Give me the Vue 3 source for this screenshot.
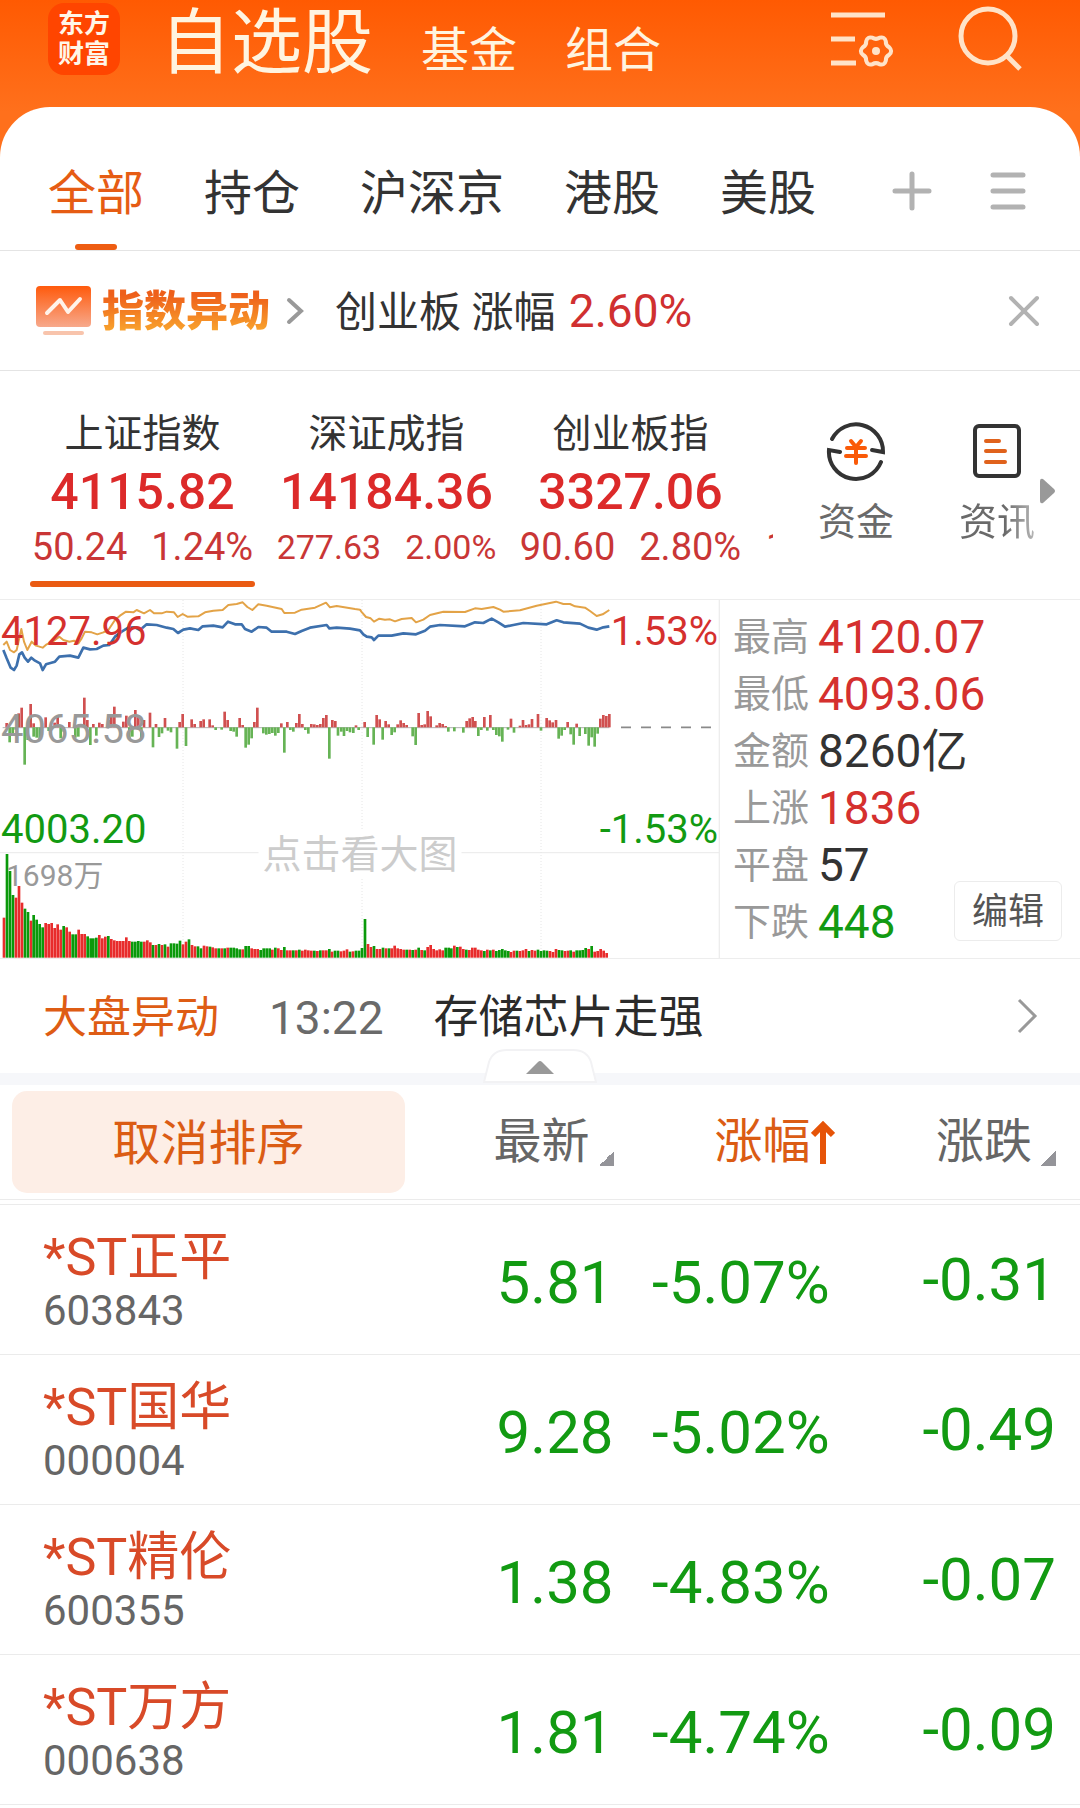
<script setup>
import { ref } from 'vue'

const markets = ['全部', '持仓', '沪深京', '港股', '美股']
const activeMarket = ref('全部')

const indices = [
  { name: '上证指数', value: '4115.82', change: '50.24', percent: '1.24%' },
  { name: '深证成指', value: '14184.36', change: '277.63', percent: '2.00%', compact: true },
  { name: '创业板指', value: '3327.06', change: '90.60', percent: '2.80%' },
]
const activeIndex = ref('上证指数')

const stats = [
  { label: '最高', value: '4120.07', tone: 'up' },
  { label: '最低', value: '4093.06', tone: 'up' },
  { label: '金额', value: '8260亿', tone: 'flat' },
  { label: '上涨', value: '1836', tone: 'up' },
  { label: '平盘', value: '57', tone: 'flat' },
  { label: '下跌', value: '448', tone: 'down' },
]

const stocks = [
  { name: '*ST正平', code: '603843', price: '5.81', percent: '-5.07%', change: '-0.31' },
  { name: '*ST国华', code: '000004', price: '9.28', percent: '-5.02%', change: '-0.49' },
  { name: '*ST精伦', code: '600355', price: '1.38', percent: '-4.83%', change: '-0.07' },
  { name: '*ST万方', code: '000638', price: '1.81', percent: '-4.74%', change: '-0.09' },
]

// Chart space: 2160 units wide, three per pixel; y runs from 15 to 1089.
const leadLine =
  '10,150 20,140 30,165 42,172 50,165 64,102 72,140 82,165 95,140 108,152 128,158 140,148 158,140 178,125 190,135 208,140 222,137 235,145 245,130 255,110 275,112 292,118 310,112 325,105 345,75 360,62 378,50 400,52 410,45 432,55 450,45 462,55 485,55 500,50 522,52 533,66 548,57 562,65 595,64 615,52 640,47 668,45 685,30 710,27 728,22 742,36 757,45 775,28 800,32 845,42 853,54 885,53 905,44 945,38 978,23 990,37 1010,33 1065,42 1080,44 1084,50 1098,66 1112,70 1122,80 1138,71 1155,74 1170,73 1185,79 1205,72 1235,69 1248,82 1270,74 1290,60 1330,50 1395,51 1425,40 1445,42 1480,36 1500,44 1510,50 1560,46 1610,32 1668,20 1690,27 1710,27 1725,34 1755,38 1770,48 1790,63 1808,58 1828,45'
const priceLine =
  '10,165 20,190 32,218 42,225 50,212 58,178 66,172 74,188 84,200 94,188 105,197 120,205 128,225 138,208 165,200 178,185 210,182 235,188 250,158 270,163 290,162 310,152 328,150 345,125 365,110 385,98 405,97 420,105 440,88 470,90 500,98 520,102 534,114 550,104 570,100 595,105 608,94 640,92 668,97 684,80 705,88 725,88 735,102 755,110 775,96 800,98 815,110 860,110 885,117 905,108 930,98 980,90 988,100 1010,98 1050,101 1080,106 1090,118 1100,125 1115,127 1122,135 1135,122 1175,122 1210,115 1248,118 1275,107 1290,95 1320,90 1395,94 1425,82 1450,84 1475,71 1495,82 1515,95 1540,90 1570,84 1640,88 1670,76 1690,82 1740,86 1765,98 1790,104 1810,97 1828,94'

const MID = 397
const momentumData =
  '20,384 56,355 65,338 92,327 101,385 137,367 164,383 173,366 208,381 253,308 262,375 280,387 298,383 307,387 325,375 334,360 343,335 370,380 379,362 406,345 415,365 432,375 450,353 468,387 495,369 539,381 548,357 575,373 584,387 602,378 611,373 629,373 638,391 674,350 683,375 719,369 728,390 763,381 772,338 844,385 862,381 889,384 898,357 907,387 934,387 943,388 952,390 961,387 970,369 979,360 997,375 1006,378 1068,391 ' +
  '29,442 38,420 47,404 74,509 83,435 101,425 110,428 119,435 146,408 182,430 191,410 226,428 235,425 271,450 289,422 388,430 397,425 424,430 459,457 477,426 486,415 504,407 513,412 531,461 558,453 647,405 665,404 692,408 701,410 710,425 737,458 746,449 755,430 790,415 799,419 808,417 817,414 826,422 835,414 853,473 871,405 880,410 916,405 925,416 988,491 1014,422 1024,410 1032,423 1041,408 1050,412 1060,414 1076,405 ' +
  '1094,381 1130,360 1139,373 1157,378 1166,388 1193,388 1202,376 1211,384 1220,390 1256,354 1265,390 1274,388 1283,348 1292,364 1310,391 1319,384 1328,387 1337,393 1400,378 1409,370 1418,366 1426,378 1453,366 1471,360 1533,371 1560,392 1569,375 1578,390 1587,388 1596,372 1614,357 1640,369 1649,376 1658,382 1668,375 1703,381 1730,386 1801,371 1810,360 1819,363 1828,357 ' +
  '1103,426 1121,449 1148,434 1175,420 1184,412 1238,424 1247,450 1345,410 1363,409 1390,413 1435,423 1444,405 1462,407 1480,405 1489,420 1498,424 1507,440 1524,404 1542,413 1623,407 1676,431 1685,422 1694,405 1712,418 1721,449 1739,423 1756,417 1766,452 1775,427 1784,455 1793,416'
const momentum = momentumData.split(' ').map((pair) => {
  const [x, y] = pair.split(',').map(Number)
  return { x: x - 4, y: Math.min(y, MID), height: Math.abs(y - MID), rising: y < MID }
})

const FLOOR = 1088
const volumeData =
  '968r 777g 828g 900g 908r 873r 923r 941g 951g 977r 960g 974g 987g 997g 984r 987r 984r 999r 988r 1004r 993g 997r 1010r 1018g 1018g 1004r 1017r 1017r 1024g 1030g 1030g 1028g 1020r 1030r 1025r 1023g 1032r 1036r 1038r 1038r 1038r 1027r 1038r 1040g 1040g 1038g 1040g 1040r 1036r 1042r 1050g 1050r 1047g 1050r 1048g 1055r 1045g 1045g 1046g 1037g 1048r 1040r 1033g 1050r 1054r 1054g 1060g 1052r 1054r 1055g 1057r 1060r 1060g 1060r 1060g 1058r 1058g 1058g 1060g 1063g 1063r 1053g 1053g 1060r 1062r 1062r 1065g 1060g 1060g 1060g 1064r 1058g 1060r 1065r 1056g 1066r 1066r 1066g 1066r 1064g 1067r 1064r 1066r 1067r 1067g 1068r 1066g 1066r 1066r 1062g 1070r 1067g 1067g 1069r 1067r 1063r 1070g 1069r 1067g 1067g 1059g ' +
  '972g 1047r 1056r 1053g 1062r 1062r 1058g 1060r 1060g 1060r 1052r 1060r 1062r 1064r 1064g 1064r 1065g 1064r 1058g 1065r 1066g 1056r 1050r 1062r 1066r 1063r 1066r 1058g 1058g 1060g 1052r 1056g 1055r 1062r 1064g 1065r 1058r 1058r 1064r 1066r 1068g 1064r 1066g 1064r 1068g 1065g 1062g 1066g 1068g 1071r 1067r 1067g 1068r 1066r 1062r 1068g 1065r 1067r 1064g 1068g 1066g 1067g 1068r 1071r 1062r 1065g 1066g 1068r 1067r 1066g 1070r 1066g 1066g 1065g 1059g 1062r 1053g 1070r 1068r 1062r 1067r 1074r'
const volume = volumeData.split(' ').map((entry, i) => {
  const top = parseInt(entry, 10)
  return { x: 8 + i * 9 - Math.round(i / 20), y: top, height: FLOOR - top, rising: entry.endsWith('r') }
})
</script>

<template>
  <div class="app">
    <header class="topbar">
      <div class="logo"><span>东方</span><span>财富</span></div>
      <nav class="sections">
        <a href="#watchlist" class="current">自选股</a>
        <a href="#funds">基金</a>
        <a href="#portfolio">组合</a>
      </nav>
      <div class="tools">
        <button type="button" aria-label="列表设置">
          <svg width="66" height="66" viewBox="0 0 66 66" fill="none" stroke="#ffe3c8" stroke-width="5">
            <path d="M3 9H57M3 33H27M3 57H28" />
            <path
              stroke-width="4"
              stroke-linejoin="round"
              d="M61.3 41.4Q65 45 61.3 48.6Q57.5 50.5 57.8 54.8Q56.5 59.7 51.6 58.3Q48 56 44.4 58.3Q39.5 59.7 38.2 54.8Q38.5 50.5 34.7 48.6Q31 45 34.7 41.4Q38.5 39.5 38.2 35.2Q39.5 30.3 44.4 31.7Q48 34 51.6 31.7Q56.5 30.3 57.8 35.2Q57.5 39.5 61.3 41.4Z"
            />
            <circle cx="48" cy="45" r="4" fill="#ffe3c8" stroke="none" />
          </svg>
        </button>
        <button type="button" aria-label="搜索">
          <svg width="66" height="66" viewBox="0 0 66 66" fill="none" stroke="#ffe3c8" stroke-width="5">
            <circle cx="30" cy="30" r="27" />
            <path d="M48 49L62 63" />
          </svg>
        </button>
      </div>
    </header>

    <main class="panel">
      <div class="markets">
        <button
          v-for="m in markets"
          :key="m"
          type="button"
          class="market"
          :class="{ active: m === activeMarket }"
          @click="activeMarket = m"
        >
          {{ m }}
        </button>
        <div class="market-tools">
          <button type="button" aria-label="添加分组">
            <svg width="40" height="40" viewBox="0 0 40 40" stroke="#b2b2b2" stroke-width="5" stroke-linecap="round">
              <path d="M20 3V37M3 20H37" />
            </svg>
          </button>
          <button type="button" aria-label="管理分组">
            <svg width="40" height="40" viewBox="0 0 40 40" stroke="#b2b2b2" stroke-width="5" stroke-linecap="round">
              <path d="M5 4H35M5 20H35M5 36H35" />
            </svg>
          </button>
        </div>
      </div>

      <section class="alert">
        <svg class="alert-icon" width="55" height="50" viewBox="0 0 55 50">
          <defs>
            <linearGradient id="badge" x1="0" y1="0" x2="0" y2="1">
              <stop offset="0" stop-color="#ff5a0c" />
              <stop offset="1" stop-color="#f7a98c" />
            </linearGradient>
          </defs>
          <rect width="55" height="41" rx="4" fill="url(#badge)" />
          <path d="M11 27L24 14L32 26L44 13" fill="none" stroke="#fff3ea" stroke-width="4" stroke-linecap="round" stroke-linejoin="round" />
          <rect x="7" y="45" width="41" height="4" rx="2" fill="#f8c4ac" />
        </svg>
        <strong class="alert-title">指数异动</strong>
        <svg class="alert-arrow" width="18" height="30" viewBox="0 0 18 30" fill="none" stroke="#999" stroke-width="4" stroke-linecap="round">
          <path d="M3 4L15 15L3 26" />
        </svg>
        <p class="alert-text">创业板 涨幅 <b>2.60%</b></p>
        <button type="button" class="alert-close" aria-label="关闭">
          <svg width="32" height="32" viewBox="0 0 32 32" stroke="#b2b2b2" stroke-width="4" stroke-linecap="round">
            <path d="M3 3L29 29M29 3L3 29" />
          </svg>
        </button>
      </section>

      <section class="overview">
        <div class="indices">
          <button
            v-for="item in indices"
            :key="item.name"
            type="button"
            class="index"
            :class="{ active: item.name === activeIndex, compact: item.compact }"
            @click="activeIndex = item.name"
          >
            <span class="index-name">{{ item.name }}</span>
            <span class="index-value">{{ item.value }}</span>
            <span class="index-change"><span>{{ item.change }}</span><span>{{ item.percent }}</span></span>
          </button>
          <div class="index next">
            <span class="index-change">1</span>
          </div>
        </div>
        <div class="shortcuts">
          <a href="#capital" class="shortcut">
            <svg width="62" height="62" viewBox="0 0 62 62" fill="none" stroke="#333" stroke-width="4">
              <path d="M7 19A27 27 0 0 1 58 32L47 30" stroke-linecap="round" />
              <path d="M56 42A27 27 0 0 1 4 30L15 32" stroke-linecap="round" />
              <path d="M26 21L31 27L36 21M22 28H40M21 36H41M31 27V43" stroke="#fa5a08" stroke-linecap="round" />
            </svg>
            <span>资金</span>
          </a>
          <a href="#news" class="shortcut fading">
            <svg width="62" height="62" viewBox="0 0 62 62" fill="none" stroke="#333" stroke-width="4">
              <rect x="9" y="6" width="44" height="50" rx="4" />
              <path d="M20 21H33M20 31H39M20 42H39" stroke="#e0621c" stroke-linecap="round" />
            </svg>
            <span>资讯</span>
          </a>
          <svg class="more" width="16" height="26" viewBox="0 0 16 26" fill="#999"><path d="M0 3Q0 0 3 1L14 11Q16 13 14 15L3 25Q0 26 0 23Z" /></svg>
        </div>
      </section>

      <section class="market-detail">
        <div class="chart">
          <svg class="plot" viewBox="0 15 2160 1074">
            <g stroke="#ededed" stroke-width="4">
              <path d="M0 773H2160M2158 15V1089" />
              <path d="M549 15V1089M1086 15V1089M1623 15V1089" stroke="#e6e6e6" stroke-width="3" stroke-dasharray="3 6" />
            </g>
            <path d="M8 398H1828" stroke="#8a8a8a" stroke-width="2" />
            <path d="M1863 397H2140" stroke="#8a8a8a" stroke-width="5" stroke-dasharray="30 30" />
            <rect
              v-for="(bar, i) in momentum"
              :key="'m' + i"
              :x="bar.x"
              :y="bar.y"
              width="8"
              :height="bar.height"
              :fill="bar.rising ? '#d05050' : '#66b355'"
            />
            <rect
              v-for="(bar, i) in volume"
              :key="'v' + i"
              :x="bar.x"
              :y="bar.y"
              width="8"
              :height="bar.height"
              :fill="bar.rising ? '#e82c2c' : '#0a990a'"
            />
            <polyline :points="leadLine" fill="none" stroke="#e3a347" stroke-width="6" stroke-linejoin="round" />
            <polyline :points="priceLine" fill="none" stroke="#3d70ad" stroke-width="8" stroke-linejoin="round" />
          </svg>
          <span class="scale high up">4127.96</span>
          <span class="scale mid">4065.58</span>
          <span class="scale low down">4003.20</span>
          <span class="scale high right up">1.53%</span>
          <span class="scale low right down">-1.53%</span>
          <span class="scale vol">1698万</span>
          <span class="hint">点击看大图</span>
        </div>
        <div class="stats">
          <dl>
            <div v-for="s in stats" :key="s.label" class="stat">
              <dt>{{ s.label }}</dt>
              <dd :class="s.tone">{{ s.value }}</dd>
            </div>
          </dl>
          <button type="button" class="edit">编辑</button>
        </div>
      </section>

      <section class="news">
        <span class="news-title">大盘异动</span>
        <time class="news-time">13:22</time>
        <a href="#story" class="news-text">存储芯片走强</a>
        <svg width="24" height="36" viewBox="0 0 24 36" fill="none" stroke="#999" stroke-width="3"><path d="M3 2L19 18L3 34" /></svg>
        <button type="button" class="collapse" aria-label="收起">
          <svg width="114" height="34" viewBox="0 0 114 34">
            <path d="M1 33Q4 21 6 13Q10 1 24 1H90Q104 1 108 13Q110 21 113 33Z" fill="#fff" stroke="#f2f2f4" stroke-width="2" />
            <path d="M43 25L55 13Q57 11 59 13L71 25Z" fill="#999" />
          </svg>
        </button>
      </section>
      <div class="band"></div>

      <table class="quotes">
        <thead>
          <tr>
            <th class="col-name"><div class="head first"><button type="button" class="cancel">取消排序</button></div></th>
            <th class="col-price"><div class="head"><button type="button" class="sort">最新<i class="corner"></i></button></div></th>
            <th class="col-percent">
              <div class="head">
                <button type="button" class="sort sorted">
                  涨幅<svg width="24" height="44" viewBox="0 0 24 44" fill="none" stroke="#e65408" stroke-width="6"><path d="M12 44V5M2 15L12 5L22 15" /></svg>
                </button>
              </div>
            </th>
            <th class="col-change"><div class="head last"><button type="button" class="sort">涨跌<i class="corner"></i></button></div></th>
          </tr>
        </thead>
        <tbody>
          <tr v-for="s in stocks" :key="s.code">
            <td class="who">
              <div class="stock-name">{{ s.name }}</div>
              <div class="stock-code">{{ s.code }}</div>
            </td>
            <td>{{ s.price }}</td>
            <td>{{ s.percent }}</td>
            <td class="delta">{{ s.change }}</td>
          </tr>
        </tbody>
      </table>
    </main>
  </div>
</template>

<style>
body {
  background: #fff;
}
</style>

<style scoped>
.app {
  font-family: Roboto, 'Noto Sans CJK SC', sans-serif;
  color: #333;
  background: linear-gradient(#ff5a02, #ff701c 112px, #ff701c 180px, #fff 180px);
  overflow: hidden;
}
button {
  font: inherit;
  color: inherit;
  background: none;
  border: 0;
  padding: 0;
  cursor: pointer;
}
a {
  color: inherit;
  text-decoration: none;
}
svg {
  display: block;
}
.up {
  color: #d5302e;
}
.down {
  color: #129a12;
}
.flat {
  color: #333;
}

/* Top bar */
.topbar {
  display: flex;
  align-items: center;
  height: 78px;
  padding: 0 56px 29px 48px;
}
.logo {
  display: flex;
  flex-direction: column;
  justify-content: center;
  align-items: center;
  width: 72px;
  height: 72px;
  border-radius: 16px;
  background: #ff4500;
  color: #fff6e8;
  font-size: 26px;
  line-height: 30px;
  font-weight: 700;
}
.sections {
  display: flex;
  align-items: baseline;
  gap: 48px;
  margin: 16px 0 0 40px;
  color: #fff4e0;
  font-size: 48px;
  line-height: 78px;
}
.sections .current {
  font-size: 71px;
}
.tools {
  display: flex;
  gap: 64px;
  margin-left: auto;
}

/* Market tabs */
.panel {
  background: #fff;
  border-radius: 50px 50px 0 0;
}
.markets {
  display: flex;
  align-items: stretch;
  gap: 60px;
  height: 143px;
  padding: 0 52px 0 48px;
  border-bottom: 1px solid #e4e4e4;
}
.market {
  position: relative;
  padding-top: 31px;
  font-size: 48px;
  line-height: 60px;
  white-space: nowrap;
}
.market.active {
  color: #e65c14;
}
.market.active::after {
  content: '';
  position: absolute;
  left: 50%;
  bottom: 0;
  width: 42px;
  height: 6px;
  margin-left: -21px;
  border-radius: 3px;
  background: #ee5d12;
}
.market-tools {
  display: flex;
  align-items: center;
  gap: 56px;
  margin-left: auto;
  padding-top: 24px;
}

/* Alert strip */
.alert {
  display: flex;
  align-items: center;
  height: 119px;
  padding: 0 40px 0 36px;
  border-bottom: 1px solid #e4e4e4;
}
.alert-title {
  margin-left: 11px;
  padding-top: 3px;
  font-size: 42px;
  line-height: 60px;
  font-weight: 900;
  background: linear-gradient(#ee5f1a 25%, #f8a02c 80%);
  background-clip: text;
  -webkit-background-clip: text;
  color: transparent;
}
.alert-arrow {
  margin-left: 16px;
}
.alert-text {
  margin: 2px 0 0 31px;
  font-size: 42px;
  line-height: 60px;
}
.alert-text b {
  margin-left: 3px;
  font-size: 46px;
  font-weight: 400;
  color: #d03030;
}
.alert-close {
  margin-left: auto;
}

/* Index overview */
.overview {
  display: flex;
  height: 228px;
}
.indices {
  display: flex;
  flex: 1;
  gap: 19px;
  min-width: 0;
  padding-left: 30px;
  overflow: hidden;
}
.index {
  position: relative;
  display: flex;
  flex: none;
  flex-direction: column;
  align-items: center;
  width: 225px;
  padding-top: 35px;
}
.index.active::after {
  content: '';
  position: absolute;
  left: 0;
  right: 0;
  bottom: 12px;
  height: 6px;
  border-radius: 3px;
  background: #ea5b13;
}
.index-name {
  font-size: 39px;
  line-height: 56px;
}
.index-value {
  font-size: 50px;
  line-height: 60px;
  font-weight: 500;
  color: #dc2a2a;
}
.index-change {
  display: flex;
  gap: 24px;
  font-size: 38px;
  line-height: 50px;
  color: #c93636;
}
.index.compact .index-change {
  font-size: 34px;
}
.index.next {
  align-items: flex-start;
  padding: 151px 0 0 4px;
}
.shortcuts {
  display: flex;
  align-items: center;
  flex: none;
  padding: 0 24px 0 45px;
}
.shortcut {
  display: flex;
  flex-direction: column;
  align-items: center;
  gap: 12px;
  font-size: 38px;
  line-height: 56px;
  color: #6a6a6a;
}
.shortcut + .shortcut {
  margin-left: 65px;
}
.shortcut.fading span {
  background: linear-gradient(90deg, #6a6a6a 60%, #b8b8b8);
  background-clip: text;
  -webkit-background-clip: text;
  color: transparent;
}
.more {
  margin: 12px 0 0 5px;
}

/* Intraday chart */
.market-detail {
  display: flex;
  border-top: 1px solid #ededed;
  border-bottom: 1px solid #ededed;
}
.chart {
  position: relative;
  flex: 2;
}
.plot {
  width: 100%;
  height: auto;
}
.scale {
  position: absolute;
  left: 1px;
  font-size: 40px;
  line-height: 48px;
}
.scale.right {
  left: auto;
  right: 2px;
}
.high {
  top: 8px;
}
.mid {
  top: 106px;
  color: #999;
}
.low {
  top: 206px;
}
.scale.vol {
  top: 252px;
  left: 6px;
  font-size: 30px;
  line-height: 48px;
  color: #999;
}
.hint {
  position: absolute;
  top: 231px;
  left: 50%;
  padding: 0 4px;
  transform: translateX(-50%);
  background: #fff;
  font-size: 39px;
  line-height: 48px;
  color: #ccc;
  white-space: nowrap;
}
.stats {
  position: relative;
  flex: 1;
}
.stats dl {
  margin: 0;
  padding: 9px 0 0 13px;
}
.stat {
  display: flex;
  gap: 9px;
  height: 57px;
  line-height: 57px;
}
.stat dt {
  font-size: 38px;
  color: #999;
}
.stat dd {
  margin: 0;
  font-size: 46px;
}
.edit {
  position: absolute;
  right: 18px;
  bottom: 17px;
  width: 108px;
  height: 60px;
  border: 1px solid #ececec;
  border-radius: 6px;
  background: #fff;
  font-size: 36px;
  line-height: 60px;
  color: #555;
}

/* News strip */
.news {
  position: relative;
  display: flex;
  align-items: center;
  height: 114px;
  padding: 0 40px 0 43px;
  font-size: 44px;
  line-height: 60px;
}
.news-title {
  padding-top: 4px;
  color: #de5c14;
}
.news-time {
  margin-left: 50px;
  padding-top: 3px;
  font-size: 46px;
  color: #6a6a6a;
}
.news-text {
  margin: 0 auto 0 50px;
  padding-top: 4px;
  font-size: 45px;
  color: #2b2b2b;
}
.collapse {
  position: absolute;
  left: 50%;
  bottom: -10px;
  margin-left: -57px;
}
.band {
  height: 12px;
  background: #f6f7fa;
}

/* Quote table */
.quotes {
  width: 100%;
  table-layout: fixed;
  border-collapse: separate;
  border-spacing: 0;
}
.col-name {
  width: 40%;
}
.col-price {
  width: 17%;
}
.col-percent {
  width: 20%;
}
.quotes th {
  height: 119px;
  padding: 0;
  border-bottom: 1px solid #ebebeb;
  font-weight: 400;
  vertical-align: top;
}
.head {
  display: flex;
  align-items: center;
  justify-content: flex-end;
  height: 114px;
  border-bottom: 1px solid #ebebeb;
}
.head.first {
  padding: 0 27px 0 12px;
}
.head.last {
  padding-right: 24px;
}
.cancel {
  flex: 1;
  height: 102px;
  padding-bottom: 6px;
  border-radius: 15px;
  background: #fdeee6;
  color: #db5c14;
  font-size: 48px;
}
.sort {
  display: flex;
  align-items: center;
  font-size: 48px;
  line-height: 60px;
  color: #666;
}
.sorted {
  margin-right: -3px;
  color: #db5c14;
}
.corner {
  align-self: flex-end;
  width: 15px;
  height: 15px;
  margin: 0 2px 6px 9px;
  background: linear-gradient(135deg, transparent 50%, #949499 50%);
}
.last .corner {
  margin-right: 0;
}
.quotes td {
  height: 149px;
  padding: 6px 2px 0 0;
  border-bottom: 1px solid #ebebeb;
  text-align: right;
  font-size: 60px;
  line-height: 72px;
  color: #129a12;
  box-sizing: border-box;
}
.quotes tbody tr {
  height: 150px;
}
.quotes .who {
  padding: 2px 0 0 43px;
  text-align: left;
}
.quotes .delta {
  padding: 0 24px 0 0;
}
.stock-name {
  font-size: 52px;
  line-height: 60px;
  color: #d84a28;
}
.stock-code {
  font-size: 42px;
  line-height: 46px;
  color: #666;
}
</style>
